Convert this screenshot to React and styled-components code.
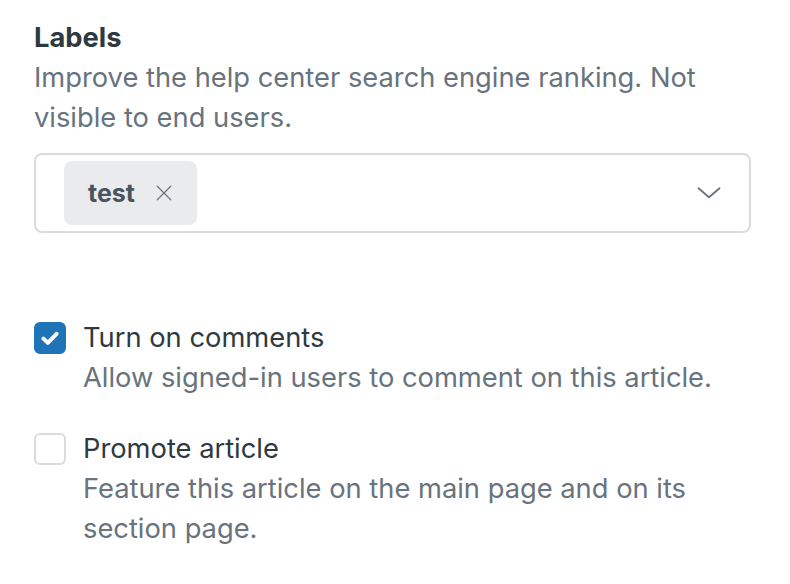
import React from 'react';
import styled, { createGlobalStyle } from 'styled-components';

const GlobalStyle = createGlobalStyle`
  body {
    margin: 0;
    background: #fff;
    font-family: Inter, "Noto Sans", "Liberation Sans", sans-serif;
    -webkit-font-smoothing: antialiased;
  }
`;

const Page = styled.div`
  width: 790px;
  height: 584px;
  box-sizing: border-box;
  padding: 18px 0 0 34px;
`;

const Field = styled.div`
  width: 717px;
`;

const Label = styled.div`
  font-size: 27.3px;
  line-height: 40px;
  font-weight: 700;
  color: #2f3941;
`;

const Hint = styled.div`
  font-size: 27.3px;
  line-height: 40px;
  color: #68737d;
`;

const Select = styled.div`
  margin-top: 15px;
  height: 80px;
  box-sizing: border-box;
  border: 2px solid #d8dcde;
  border-radius: 8px;
  display: flex;
  align-items: center;
  padding: 0 28px;
`;

const Tag = styled.div`
  height: 64px;
  box-sizing: border-box;
  padding: 0 24px;
  border-radius: 8px;
  background: #e9ebed;
  color: #49545c;
  font-size: 25px;
  font-weight: 700;
  display: flex;
  align-items: center;
  gap: 20px;
`;

const Chevron = styled.svg`
  margin-left: auto;
  margin-right: 0;
  color: #68737d;
`;

const Options = styled.div`
  margin-top: 85px;
  display: flex;
  flex-direction: column;
  gap: 31px;
`;

const Option = styled.div`
  display: grid;
  grid-template-columns: 32px 1fr;
  column-gap: 17px;
`;

const Box = styled.div`
  width: 32px;
  height: 32px;
  box-sizing: border-box;
  margin-top: 4px;
  border-radius: 6px;
  border: 2px solid ${p => (p.$checked ? '#1f73b7' : '#d8dcde')};
  background: ${p => (p.$checked ? '#1f73b7' : '#fff')};
  display: flex;
  align-items: center;
  justify-content: center;
`;

const OptionText = styled.div`
  font-size: 27.3px;
  line-height: 40px;
  color: #2f3941;
`;

const Check = () => (
  <svg width="24" height="24" viewBox="0 0 12 12">
    <path d="M2.7 6.3l2.2 2.1 4.4-4.5" fill="none" stroke="#fff" strokeWidth="2" strokeLinecap="round" strokeLinejoin="round" />
  </svg>
);

const CheckOption = ({ checked, title, hint }) => (
  <Option>
    <Box $checked={checked}>{checked && <Check />}</Box>
    <div>
      <OptionText>{title}</OptionText>
      <Hint>{hint}</Hint>
    </div>
  </Option>
);

export default function App() {
  return (
    <Page>
      <GlobalStyle />
      <Field>
        <Label>Labels</Label>
        <Hint>Improve the help center search engine ranking. Not visible to end users.</Hint>
        <Select>
          <Tag>
            test
            <svg width="18" height="18" viewBox="0 0 12 12">
              <path d="M1.5 10.5l9-9M10.5 10.5l-9-9" stroke="#68737d" strokeWidth="0.8" strokeLinecap="round" />
            </svg>
          </Tag>
          <Chevron width="24" height="24" viewBox="0 0 16 16">
            <path d="M1 4.8l7 6 7-6" fill="none" stroke="currentColor" strokeWidth="1.2" strokeLinecap="round" strokeLinejoin="round" />
          </Chevron>
        </Select>
        <Options>
          <CheckOption checked title="Turn on comments" hint="Allow signed-in users to comment on this article." />
          <CheckOption title="Promote article" hint="Feature this article on the main page and on its section page." />
        </Options>
      </Field>
    </Page>
  );
}
